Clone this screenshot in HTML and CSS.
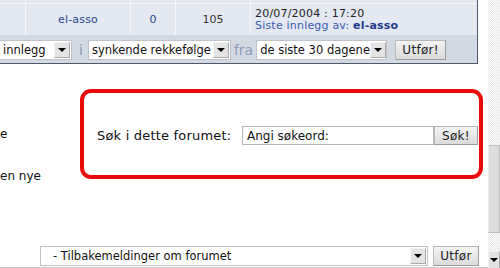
FILE: index.html
```html
<!DOCTYPE html>
<html lang="no">
<head>
  <meta charset="UTF-8">
  <title>Forum</title>
  <link rel="stylesheet" href="styles.css">
</head>
<body>
  <div class="page">
    <div class="forum-table">
      <div class="topic-grid">
        <div class="cell"></div><div class="cell"></div><div class="cell"></div><div class="cell"></div><div class="cell"></div>
        <div class="cell"></div>
        <div class="cell center author">el-asso</div>
        <div class="cell center replies">0</div>
        <div class="cell center views">105</div>
        <div class="cell last-post">
          <span class="date">20/07/2004 : 17:20</span>
          <span class="by">Siste innlegg av: <b>el-asso</b></span>
        </div>
      </div>
      <div class="sort-bar">
        <div class="select sel-field"><span class="select-text">innlegg</span><span class="arrow"></span></div>
        <span class="joiner joiner-i">i</span>
        <div class="select sel-order"><span class="select-text">synkende rekkefølge</span><span class="arrow"></span></div>
        <span class="joiner">fra</span>
        <div class="select sel-days"><span class="select-text">de siste 30 dagene</span><span class="arrow"></span></div>
        <button class="btn btn-go">Utfør!</button>
      </div>
    </div>

    <div class="middle">
      <div class="intro">
        <p class="intro-a">e</p>
        <p class="intro-b">en nye</p>
      </div>
      <div class="search-box">
        <span class="search-label">Søk i dette forumet:</span>
        <span class="search-input">Angi søkeord:</span>
        <button class="btn btn-search">Søk!</button>
      </div>
    </div>

    <div class="jump-bar">
      <div class="select sel-jump"><span class="select-text">- Tilbakemeldinger om forumet</span><span class="arrow"></span></div>
      <button class="btn btn-jump">Utfør</button>
    </div>
  </div>

  <div class="scrollbar">
    <div class="thumb"></div>
    <div class="scroll-down"></div>
  </div>
</body>
</html>
```

FILE: styles.css
```css
* { margin:0; padding:0; box-sizing:border-box; }
html, body { width:500px; height:268px; overflow:hidden; }
body {
  display:flex;
  font-family: "DejaVu Sans", Verdana, sans-serif;
  font-size:12px;
  color:#111;
  background:#fff;
}
.page { width:488px; display:flex; flex-direction:column; }

/* topic table */
.forum-table {
  width:478px;
  border-right:1px solid #4f596b;
  border-bottom:1px solid #4f596b;
}
.topic-grid {
  display:grid;
  grid-template-columns:25px 104px 44px 74px 1fr;
  grid-template-rows:3px 31px;
  gap:1px;
  background:#f4f6fa;
}
.cell { background:#e3e8f1; font-size:11px; }
.center { display:flex; align-items:center; justify-content:center; }
.author { color:#2a4790; letter-spacing:0.2px; }
.replies { color:#2a4790; }
.views { color:#333; }
.last-post {
  display:flex; flex-direction:column; justify-content:center;
  padding-left:4px; line-height:12px; letter-spacing:0.2px;
}
.date { color:#222; }
.by { color:#3a5cb2; }
.by b { color:#1f3a8c; }

.sort-bar {
  height:28px;
  background:#d2d9e2;
  display:flex; align-items:center;
  padding-top:2px;
}

/* select look-alikes */
.select {
  height:20px;
  background:#fff;
  border:1px solid #bfc4cc;
  display:flex; align-items:center;
  padding-left:3px;
  flex-shrink:0;
}
.select-text { flex:1; white-space:nowrap; font-size:11.5px; }
.arrow {
  width:16px; height:16px; margin-right:1px; flex-shrink:0;
  background:#e4e4e4;
  border:1px solid #a9a9a9;
  border-top-color:#f5f5f5; border-left-color:#f5f5f5;
  display:flex; align-items:center; justify-content:center;
}
.arrow::after {
  content:'';
  border-left:4px solid transparent;
  border-right:4px solid transparent;
  border-top:4px solid #000;
}
.sel-field { width:73px; margin-left:-1px; }
.sel-order { width:143px; }
.sel-days { width:131px; }
.joiner { color:#8b9bbb; font-size:14px; margin:0 3px; }
.joiner-i { margin:0 5px 0 7px; }

.btn {
  font-family:inherit; font-size:12px; color:#222;
  background:linear-gradient(#f4f4f4, #dadada);
  border:1px solid #b7b7b7;
  border-bottom-color:#9a9a9a; border-right-color:#9a9a9a;
  height:20px;
  letter-spacing:0.3px;
  flex-shrink:0;
}
.btn-go { width:51px; margin-left:8px; }

/* middle */
.middle { display:flex; height:182px; }
.intro { width:80px; overflow:hidden; flex-shrink:0; }
.intro p { white-space:nowrap; }
.intro-a { margin-top:63px; }
.intro-b { margin-top:28px; }

.search-box {
  width:403px; height:90px; margin-top:25px; flex-shrink:0;
  border:4px solid #ea0a0a;
  border-radius:11px;
  display:flex; align-items:center;
  padding:3px 0 0 13px;
}
.search-label {
  width:145px; flex-shrink:0; white-space:nowrap;
  font-size:13px; letter-spacing:0.2px;
}
.search-input {
  width:192px; height:19px; flex-shrink:0;
  border:1px solid #b5b5b5;
  padding-left:4px;
  display:flex; align-items:center;
}
.btn-search { width:44px; height:19px; }

/* jump */
.jump-bar {
  display:flex; align-items:center;
  height:22px;
  padding-left:40px;
  border-bottom:1px solid #c9c9c9;
  padding-bottom:2px;
}
.sel-jump { width:388px; padding-left:12px; }
.btn-jump { width:46px; margin-left:5px; }

/* scrollbar */
.scrollbar {
  width:12px; height:268px;
  background:repeating-conic-gradient(#e6e6e6 0 25%, #fdfdfd 0 50%) 0 0 / 2px 2px;
  display:flex; flex-direction:column;
}
.thumb {
  margin-top:145px; height:88px;
  background:#dcdcdc;
  border:1px solid #bdbdbd;
  border-left-color:#efefef;
}
.scroll-down {
  margin-top:auto; height:17px;
  background:#e2e2e2;
  border:1px solid #f3f3f3;
  border-right-color:#aaa; border-bottom:none;
  display:flex; justify-content:center; padding-top:6px;
}
.scroll-down::after {
  content:'';
  border-left:4px solid transparent;
  border-right:4px solid transparent;
  border-top:4px solid #000;
  height:0;
}
```
